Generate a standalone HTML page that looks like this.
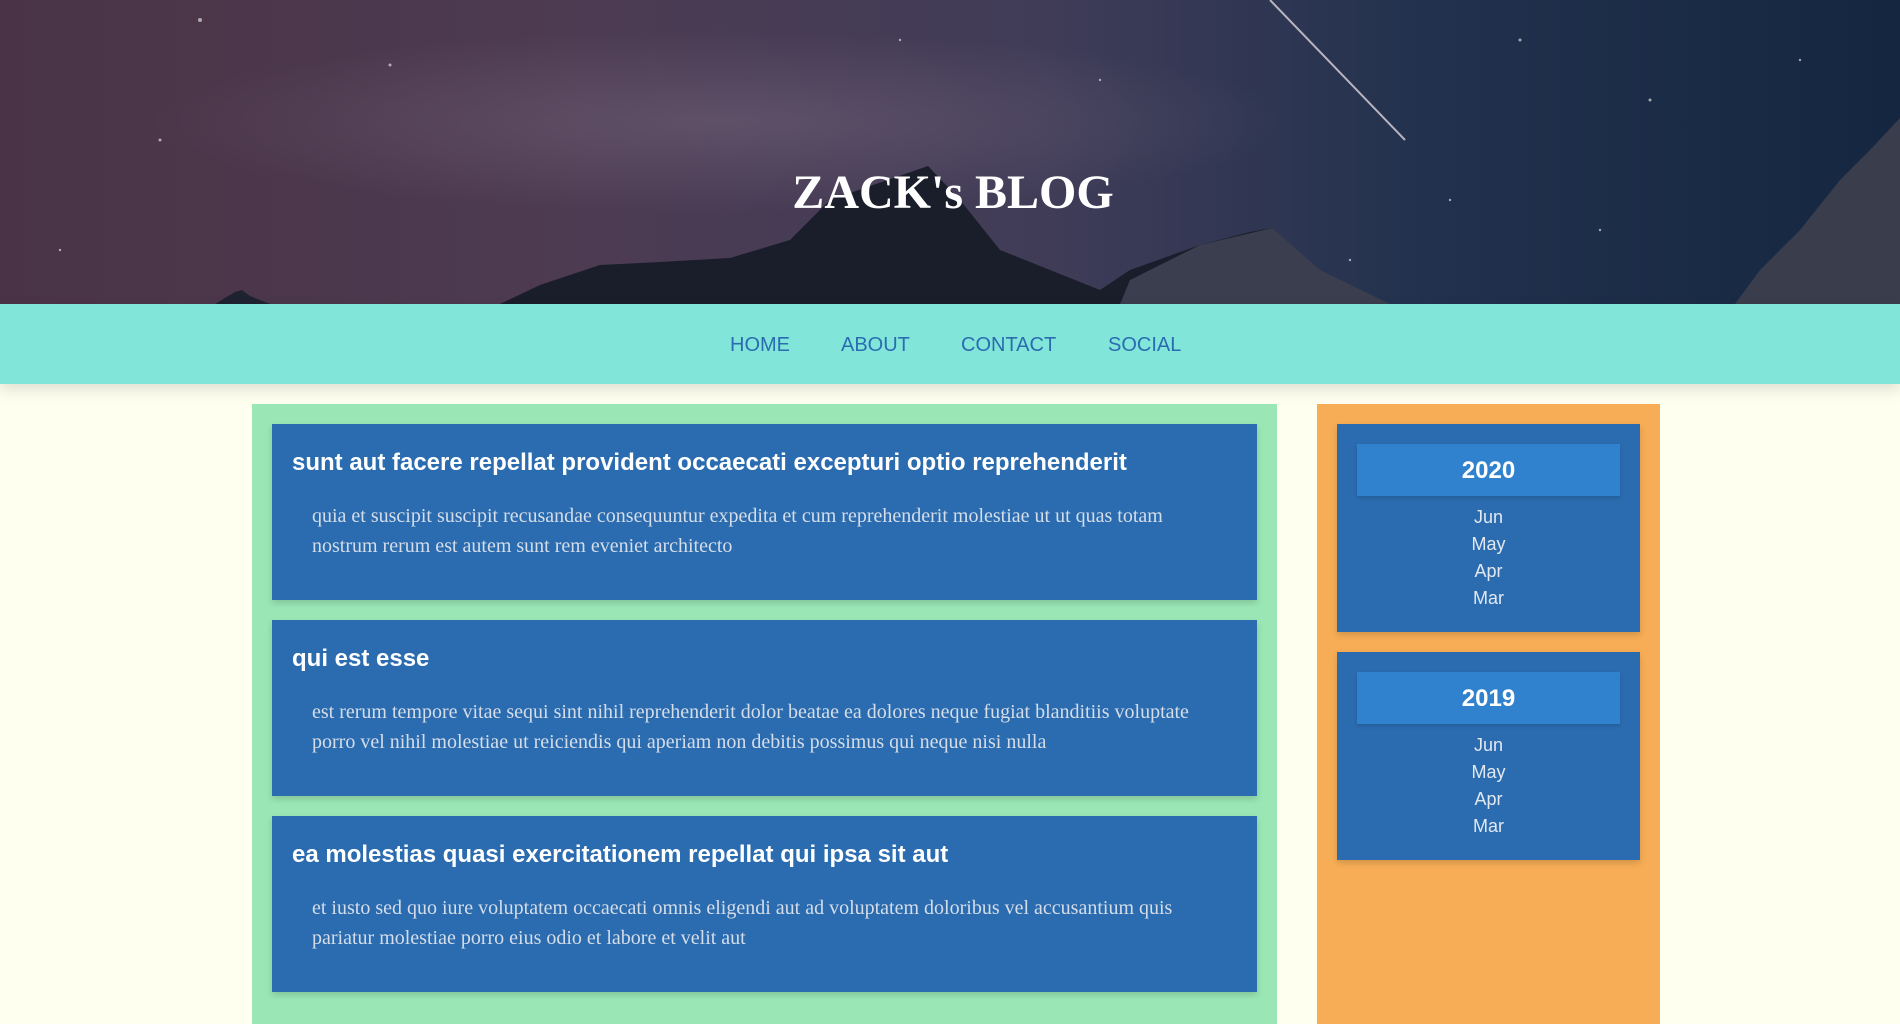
<!DOCTYPE html>
<html><head><meta charset="utf-8">
<style>
*{box-sizing:border-box;margin:0;padding:0}
body{width:1900px;height:1008px;overflow:hidden;background:#fffff0;font-family:"Liberation Sans",sans-serif;position:relative}
header{position:absolute;left:0;top:0;width:1900px;height:304px;overflow:hidden;
background:linear-gradient(90deg,#4a3346 0%,#4d3b52 30%,#403c58 55%,#22324e 75%,#142640 100%)}
header h1{position:absolute;left:6px;right:0;top:163px;text-align:center;color:#fff;font-family:"Liberation Serif",serif;font-weight:bold;font-size:48px;line-height:60px;z-index:2}
nav{position:absolute;top:304px;left:0;width:1900px;height:80px;background:#81e6d9;box-shadow:0 6px 14px rgba(0,0,0,.12);z-index:3}
nav a{position:absolute;top:29px;font-size:20px;color:#2b6cb0;text-decoration:none;line-height:24px}
.main{position:absolute;left:252px;top:404px;width:1025px;height:620px;background:#9ae6b4}
.card{position:absolute;left:20px;width:985px;height:176px;background:#2b6cb0;box-shadow:0 3px 6px rgba(0,0,0,.15);padding:20px}
.card h2{color:#fff;font-size:24px;line-height:28px;margin-top:5px}
.card p{color:#d5dde8;font-family:"Liberation Serif",serif;font-size:20px;line-height:30px;margin:24px 20px 0 20px}
.side{position:absolute;left:1317px;top:404px;width:343px;height:620px;background:#f6ad55}
.yc{position:absolute;left:20px;width:303px;height:208px;background:#2b6cb0;box-shadow:0 3px 6px rgba(0,0,0,.15)}
.yr{position:absolute;left:20px;top:20px;width:263px;height:52px;background:#3182ce;color:#fff;font-weight:bold;font-size:24px;text-align:center;line-height:54px;box-shadow:0 2px 4px rgba(0,0,0,.15)}
.m{position:absolute;left:0;width:303px;text-align:center;color:#e2e8f0;font-size:18px;line-height:27px}
</style></head><body>
<header>
<svg width="1900" height="304" style="position:absolute;left:0;top:0">
<defs><radialGradient id="mw" cx="0.38" cy="0.4" r="0.3"><stop offset="0" stop-color="#7a6a80" stop-opacity=".45"/><stop offset="1" stop-color="#7a6a80" stop-opacity="0"/></radialGradient></defs>
<rect width="1900" height="304" fill="url(#mw)"/>
<line x1="1270" y1="0" x2="1405" y2="140" stroke="#b8b4c0" stroke-width="2"/>
<g fill="#ddd" opacity=".7">
<circle cx="200" cy="20" r="2"/><circle cx="390" cy="65" r="1.5"/><circle cx="160" cy="140" r="1.5"/><circle cx="1520" cy="40" r="1.5"/><circle cx="1650" cy="100" r="1.5"/><circle cx="1800" cy="60" r="1.2"/><circle cx="1100" cy="80" r="1.2"/><circle cx="1450" cy="200" r="1.2"/><circle cx="60" cy="250" r="1.2"/><circle cx="1600" cy="230" r="1.2"/><circle cx="900" cy="40" r="1.2"/><circle cx="1350" cy="260" r="1.2"/>
</g>
<path d="M215,304 L235,292 L242,290 L250,296 L270,304Z" fill="#1f2230"/>
<path d="M500,304 L540,285 L600,265 L660,262 L730,258 L790,240 L830,200 L928,166 L960,200 L1000,250 L1050,270 L1100,290 L1130,270 L1200,245 L1250,232 L1272,228 L1300,255 L1330,280 L1390,304Z" fill="#1a1d2a"/>
<path d="M1130,280 L1200,245 L1272,228 L1320,270 L1390,304 L1120,304Z" fill="#3a3e4e"/>
<path d="M1735,304 L1760,270 L1800,230 L1840,180 L1870,150 L1900,118 L1900,304Z" fill="#3a3d4c"/>
</svg>
<h1>ZACK's BLOG</h1>
</header>
<nav>
<a style="left:730px">HOME</a>
<a style="left:841px">ABOUT</a>
<a style="left:961px">CONTACT</a>
<a style="left:1108px">SOCIAL</a>
</nav>
<div class="main">
<div class="card" style="top:20px"><h2>sunt aut facere repellat provident occaecati excepturi optio reprehenderit</h2><p>quia et suscipit suscipit recusandae consequuntur expedita et cum reprehenderit molestiae ut ut quas totam nostrum rerum est autem sunt rem eveniet architecto</p></div>
<div class="card" style="top:216px"><h2>qui est esse</h2><p>est rerum tempore vitae sequi sint nihil reprehenderit dolor beatae ea dolores neque fugiat blanditiis voluptate porro vel nihil molestiae ut reiciendis qui aperiam non debitis possimus qui neque nisi nulla</p></div>
<div class="card" style="top:412px"><h2>ea molestias quasi exercitationem repellat qui ipsa sit aut</h2><p>et iusto sed quo iure voluptatem occaecati omnis eligendi aut ad voluptatem doloribus vel accusantium quis pariatur molestiae porro eius odio et labore et velit aut</p></div>
</div>
<div class="side">
<div class="yc" style="top:20px"><div class="yr">2020</div>
<div class="m" style="top:80px">Jun</div><div class="m" style="top:107px">May</div><div class="m" style="top:134px">Apr</div><div class="m" style="top:161px">Mar</div></div>
<div class="yc" style="top:248px"><div class="yr">2019</div>
<div class="m" style="top:80px">Jun</div><div class="m" style="top:107px">May</div><div class="m" style="top:134px">Apr</div><div class="m" style="top:161px">Mar</div></div>
</div>
</body></html>
